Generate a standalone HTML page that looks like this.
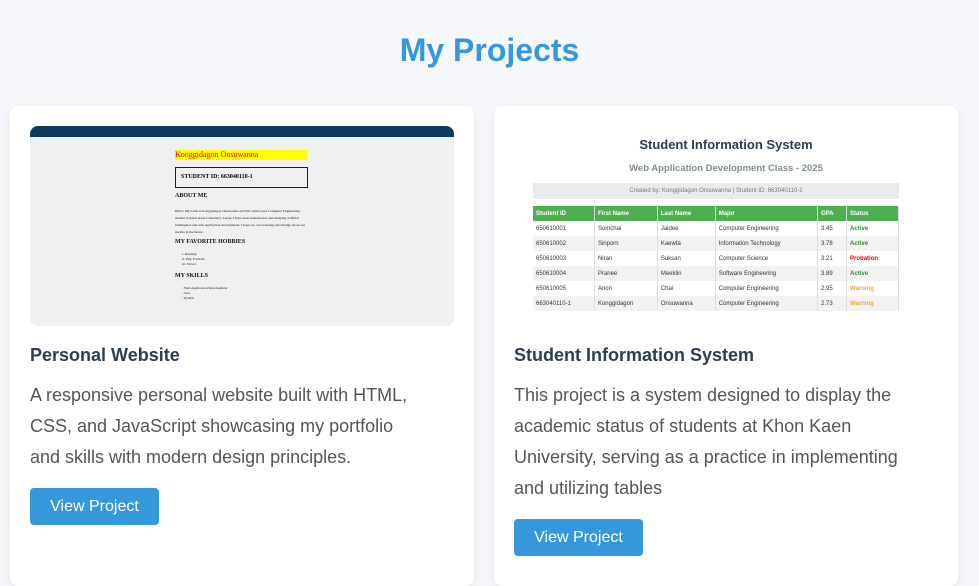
<!DOCTYPE html>
<html><head><style>
*{margin:0;padding:0;box-sizing:border-box}
body{width:979px;height:572px;overflow:hidden;background:#f5f7fa;font-family:"Liberation Sans",Arial,sans-serif}
h1{position:absolute;top:32px;left:0;width:979px;text-align:center;color:#3498db;font-size:32px;font-weight:bold}
.card{position:absolute;top:106px;width:464px;height:480px;background:#fff;border-radius:8px;box-shadow:0 2px 8px rgba(0,0,0,0.08);padding:20px}
.img{width:424px;height:200px;border-radius:8px;overflow:hidden;position:relative}
h3{position:absolute;top:239px;left:20px;font-size:18px;color:#2c3e50;font-weight:bold}
p{position:absolute;top:274px;left:20px;width:412px;font-size:18px;line-height:31px;color:#555}
.btn{position:absolute;left:20px;width:129px;height:37px;background:#3498db;color:#fff;font-size:16px;border-radius:4px;text-align:center;line-height:37px}
.s{position:absolute;font-family:"Liberation Serif",serif;color:#111}
table{border-collapse:collapse;font-size:6px;color:#333;position:absolute;left:19px;top:80px;width:366px}
td,th{height:15px;padding:0 3px;text-align:left;border-right:1px solid #ddd}
th{background:#4caf50;color:#fff;height:15px}
tr:nth-child(odd) td{background:#f2f2f2}
.g{color:#2e8b2e;font-weight:bold}.r{color:#e00;font-weight:bold}.o{color:#f5a623;font-weight:bold}
</style></head><body>
<h1>My Projects</h1>
<div class="card" style="left:10px">
<div class="img" style="background:#f0f0f0">
<div style="height:11px;background:#0d3b5e"></div>
<div style="position:absolute;left:145px;top:24px;width:133px;height:10px;background:#ff0;color:#e00;font-family:'Liberation Serif',serif;font-size:8px;line-height:10px">Konggidagon Onsuwanna</div>
<div style="position:absolute;left:145px;top:41px;width:133px;height:21px;border:1px solid #00f;font-family:'Liberation Serif',serif;font-size:6px;line-height:19px;padding-left:5px;font-weight:bold">STUDENT ID: 663040110-1</div>
<div class="s" style="left:145px;top:67px;font-size:6px;font-weight:bold">ABOUT ME</div>
<div class="s" style="left:145px;top:82px;font-size:3.5px;line-height:7px;width:135px">Hello! My name is Konggidagon Onsuwanna and I'm a third-year Computer Engineering student at Khon Kaen University. Lately, I have been interested in and studying artificial intelligence and web application development. I hope we can exchange knowledge about our studies in the future.</div>
<div class="s" style="left:145px;top:113px;font-size:6px;font-weight:bold">MY FAVORITE HOBBIES</div>
<div class="s" style="left:152px;top:126px;font-size:3.5px;line-height:5px">i. Reading<br>ii. Play Football<br>iii. Travel</div>
<div class="s" style="left:145px;top:147px;font-size:6px;font-weight:bold">MY SKILLS</div>
<div class="s" style="left:152px;top:160px;font-size:3.5px;line-height:5px">◦ Web Application Development<br>◦ Java<br>◦ Python</div>
</div>
<h3>Personal Website</h3>
<p style="width:388px">A responsive personal website built with HTML, CSS, and JavaScript showcasing my portfolio and skills with modern design principles.</p>
<div class="btn" style="top:382px">View Project</div>
</div>
<div class="card" style="left:494px">
<div class="img" style="background:#fff">
<div style="position:absolute;top:11px;width:100%;text-align:center;font-size:13px;font-weight:bold;color:#2c3e50">Student Information System</div>
<div style="position:absolute;top:37px;width:100%;text-align:center;font-size:9.5px;font-weight:bold;color:#7f8c8d">Web Application Development Class - 2025</div>
<div style="position:absolute;left:19px;top:57px;width:366px;height:16px;background:#e8ecef;text-align:center;font-size:6px;line-height:16px;color:#777">Created by: Konggidagon Onsuwanna | Student ID: 663040110-1</div>
<table>
<tr><th>Student ID</th><th>First Name</th><th>Last Name</th><th>Major</th><th>GPA</th><th>Status</th></tr>
<tr><td>650610001</td><td>Somchai</td><td>Jaidee</td><td>Computer Engineering</td><td>3.45</td><td class="g">Active</td></tr>
<tr><td>650610002</td><td>Siriporn</td><td>Kaewta</td><td>Information Technology</td><td>3.78</td><td class="g">Active</td></tr>
<tr><td>650610003</td><td>Niran</td><td>Suksan</td><td>Computer Science</td><td>3.21</td><td class="r">Probation</td></tr>
<tr><td>650610004</td><td>Pranee</td><td>Meeklin</td><td>Software Engineering</td><td>3.89</td><td class="g">Active</td></tr>
<tr><td>650610005</td><td>Anon</td><td>Chai</td><td>Computer Engineering</td><td>2.95</td><td class="o">Warning</td></tr>
<tr><td>663040110-1</td><td>Konggidagon</td><td>Onsuwanna</td><td>Computer Engineering</td><td>2.73</td><td class="o">Warning</td></tr>
</table>
</div>
<h3>Student Information System</h3>
<p>This project is a system designed to display the academic status of students at Khon Kaen University, serving as a practice in implementing and utilizing tables</p>
<div class="btn" style="top:413px">View Project</div>
</div>
</body></html>
